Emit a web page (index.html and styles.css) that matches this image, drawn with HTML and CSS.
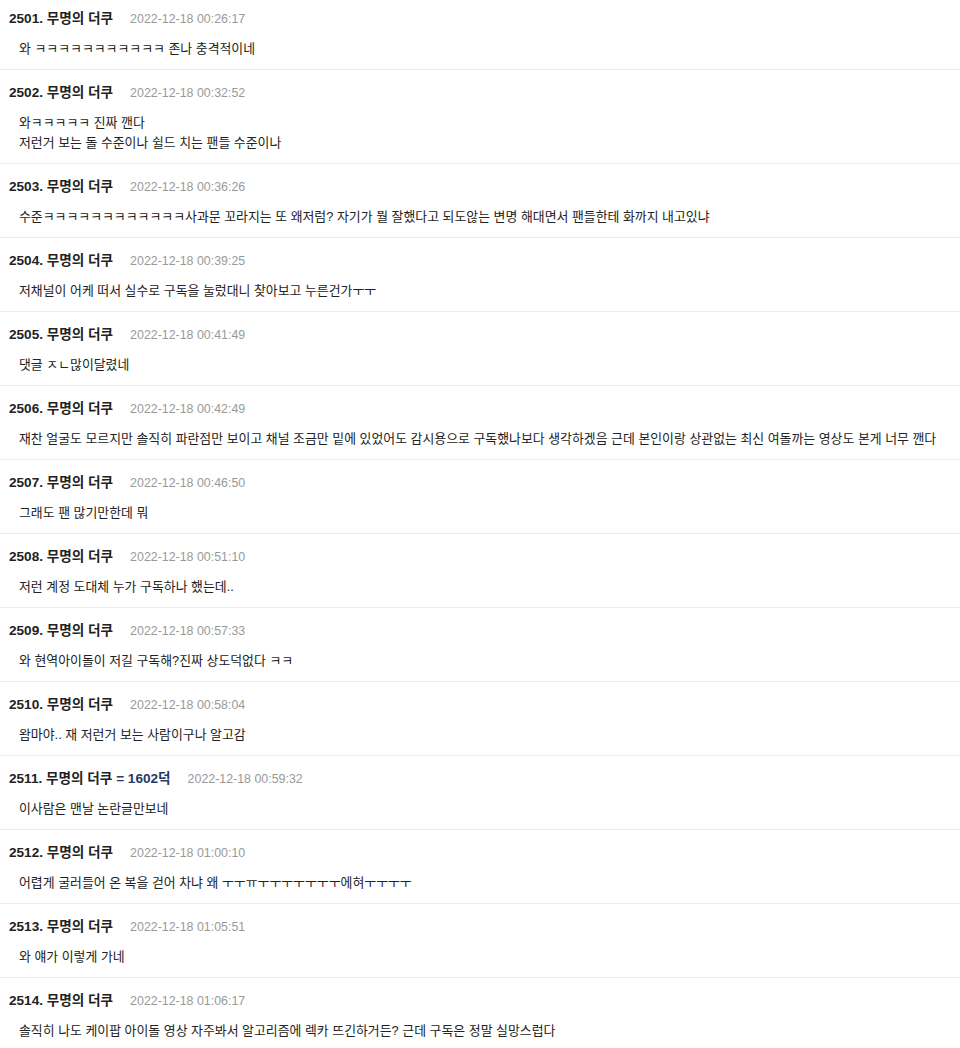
FILE: index.html
```html
<!DOCTYPE html>
<html lang="ko">
<head>
  <meta charset="UTF-8" />
  <title>댓글</title>
  <link rel="stylesheet" href="styles.css">
</head>
<body>
  <ul class="comments">
    <li class="comment">
      <div class="meta"><span class="writer">2501. 무명의 더쿠</span><span class="date">2022-12-18 00:26:17</span></div>
      <p class="text">와 ㅋㅋㅋㅋㅋㅋㅋㅋㅋㅋㅋ 존나 충격적이네</p>
    </li>
    <li class="comment">
      <div class="meta"><span class="writer">2502. 무명의 더쿠</span><span class="date">2022-12-18 00:32:52</span></div>
      <p class="text">와ㅋㅋㅋㅋㅋ 진짜 깬다<br>저런거 보는 돌 수준이나 쉴드 치는 팬들 수준이나</p>
    </li>
    <li class="comment">
      <div class="meta"><span class="writer">2503. 무명의 더쿠</span><span class="date">2022-12-18 00:36:26</span></div>
      <p class="text">수준ㅋㅋㅋㅋㅋㅋㅋㅋㅋㅋㅋㅋ사과문 꼬라지는 또 왜저럼? 자기가 뭘 잘했다고 되도않는 변명 해대면서 팬들한테 화까지 내고있냐</p>
    </li>
    <li class="comment">
      <div class="meta"><span class="writer">2504. 무명의 더쿠</span><span class="date">2022-12-18 00:39:25</span></div>
      <p class="text">저채널이 어케 떠서 실수로 구독을 눌렀대니 찾아보고 누른건가ㅜㅜ</p>
    </li>
    <li class="comment">
      <div class="meta"><span class="writer">2505. 무명의 더쿠</span><span class="date">2022-12-18 00:41:49</span></div>
      <p class="text">댓글 ㅈㄴ많이달렸네</p>
    </li>
    <li class="comment">
      <div class="meta"><span class="writer">2506. 무명의 더쿠</span><span class="date">2022-12-18 00:42:49</span></div>
      <p class="text">재찬 얼굴도 모르지만 솔직히 파란점만 보이고 채널 조금만 밑에 있었어도 감시용으로 구독했나보다 생각하겠음 근데 본인이랑 상관없는 최신 여돌까는 영상도 본게 너무 깬다</p>
    </li>
    <li class="comment">
      <div class="meta"><span class="writer">2507. 무명의 더쿠</span><span class="date">2022-12-18 00:46:50</span></div>
      <p class="text">그래도 팬 많기만한데 뭐</p>
    </li>
    <li class="comment">
      <div class="meta"><span class="writer">2508. 무명의 더쿠</span><span class="date">2022-12-18 00:51:10</span></div>
      <p class="text">저런 계정 도대체 누가 구독하나 했는데..</p>
    </li>
    <li class="comment">
      <div class="meta"><span class="writer">2509. 무명의 더쿠</span><span class="date">2022-12-18 00:57:33</span></div>
      <p class="text">와 현역아이돌이 저길 구독해?진짜 상도덕없다 ㅋㅋ</p>
    </li>
    <li class="comment">
      <div class="meta"><span class="writer">2510. 무명의 더쿠</span><span class="date">2022-12-18 00:58:04</span></div>
      <p class="text">왐마야.. 재 저런거 보는 사람이구나 알고감</p>
    </li>
    <li class="comment">
      <div class="meta"><span class="writer">2511. 무명의 더쿠 <span class="reply-to">= 1602덕</span></span><span class="date">2022-12-18 00:59:32</span></div>
      <p class="text">이사람은 맨날 논란글만보네</p>
    </li>
    <li class="comment">
      <div class="meta"><span class="writer">2512. 무명의 더쿠</span><span class="date">2022-12-18 01:00:10</span></div>
      <p class="text">어렵게 굴러들어 온 복을 걷어 차냐 왜 ㅜㅜㅠㅜㅜㅜㅜㅜㅜㅜ에혀ㅜㅜㅜㅜ</p>
    </li>
    <li class="comment">
      <div class="meta"><span class="writer">2513. 무명의 더쿠</span><span class="date">2022-12-18 01:05:51</span></div>
      <p class="text">와 얘가 이렇게 가네</p>
    </li>
    <li class="comment">
      <div class="meta"><span class="writer">2514. 무명의 더쿠</span><span class="date">2022-12-18 01:06:17</span></div>
      <p class="text">솔직히 나도 케이팝 아이돌 영상 자주봐서 알고리즘에 렉카 뜨긴하거든? 근데 구독은 정말 실망스럽다</p>
    </li>
  </ul>
</body>
</html>
```

FILE: styles.css
```css
body {
  margin: 0;
  font-family: "Liberation Sans", "Noto Sans CJK KR", sans-serif;
  color: #222;
  background: #fff;
}
.comments {
  list-style: none;
  margin: -4px 0 0;
  padding: 0;
}
.comment {
  padding: 14px 9px 10px;
  border-bottom: 1px solid #ebebeb;
}
.meta {
  display: flex;
  align-items: center;
  height: 18px;
  line-height: 18px;
}
.writer {
  font-size: 13.6px;
  font-weight: bold;
  color: #222;
}
.reply-to {
  color: #233a62;
}
.date {
  margin-left: 17px;
  font-size: 12.4px;
  color: #999;
}
.text {
  margin: 11px 0 0 10px;
  font-size: 12.9px;
  line-height: 20px;
  color: #222;
}
```
